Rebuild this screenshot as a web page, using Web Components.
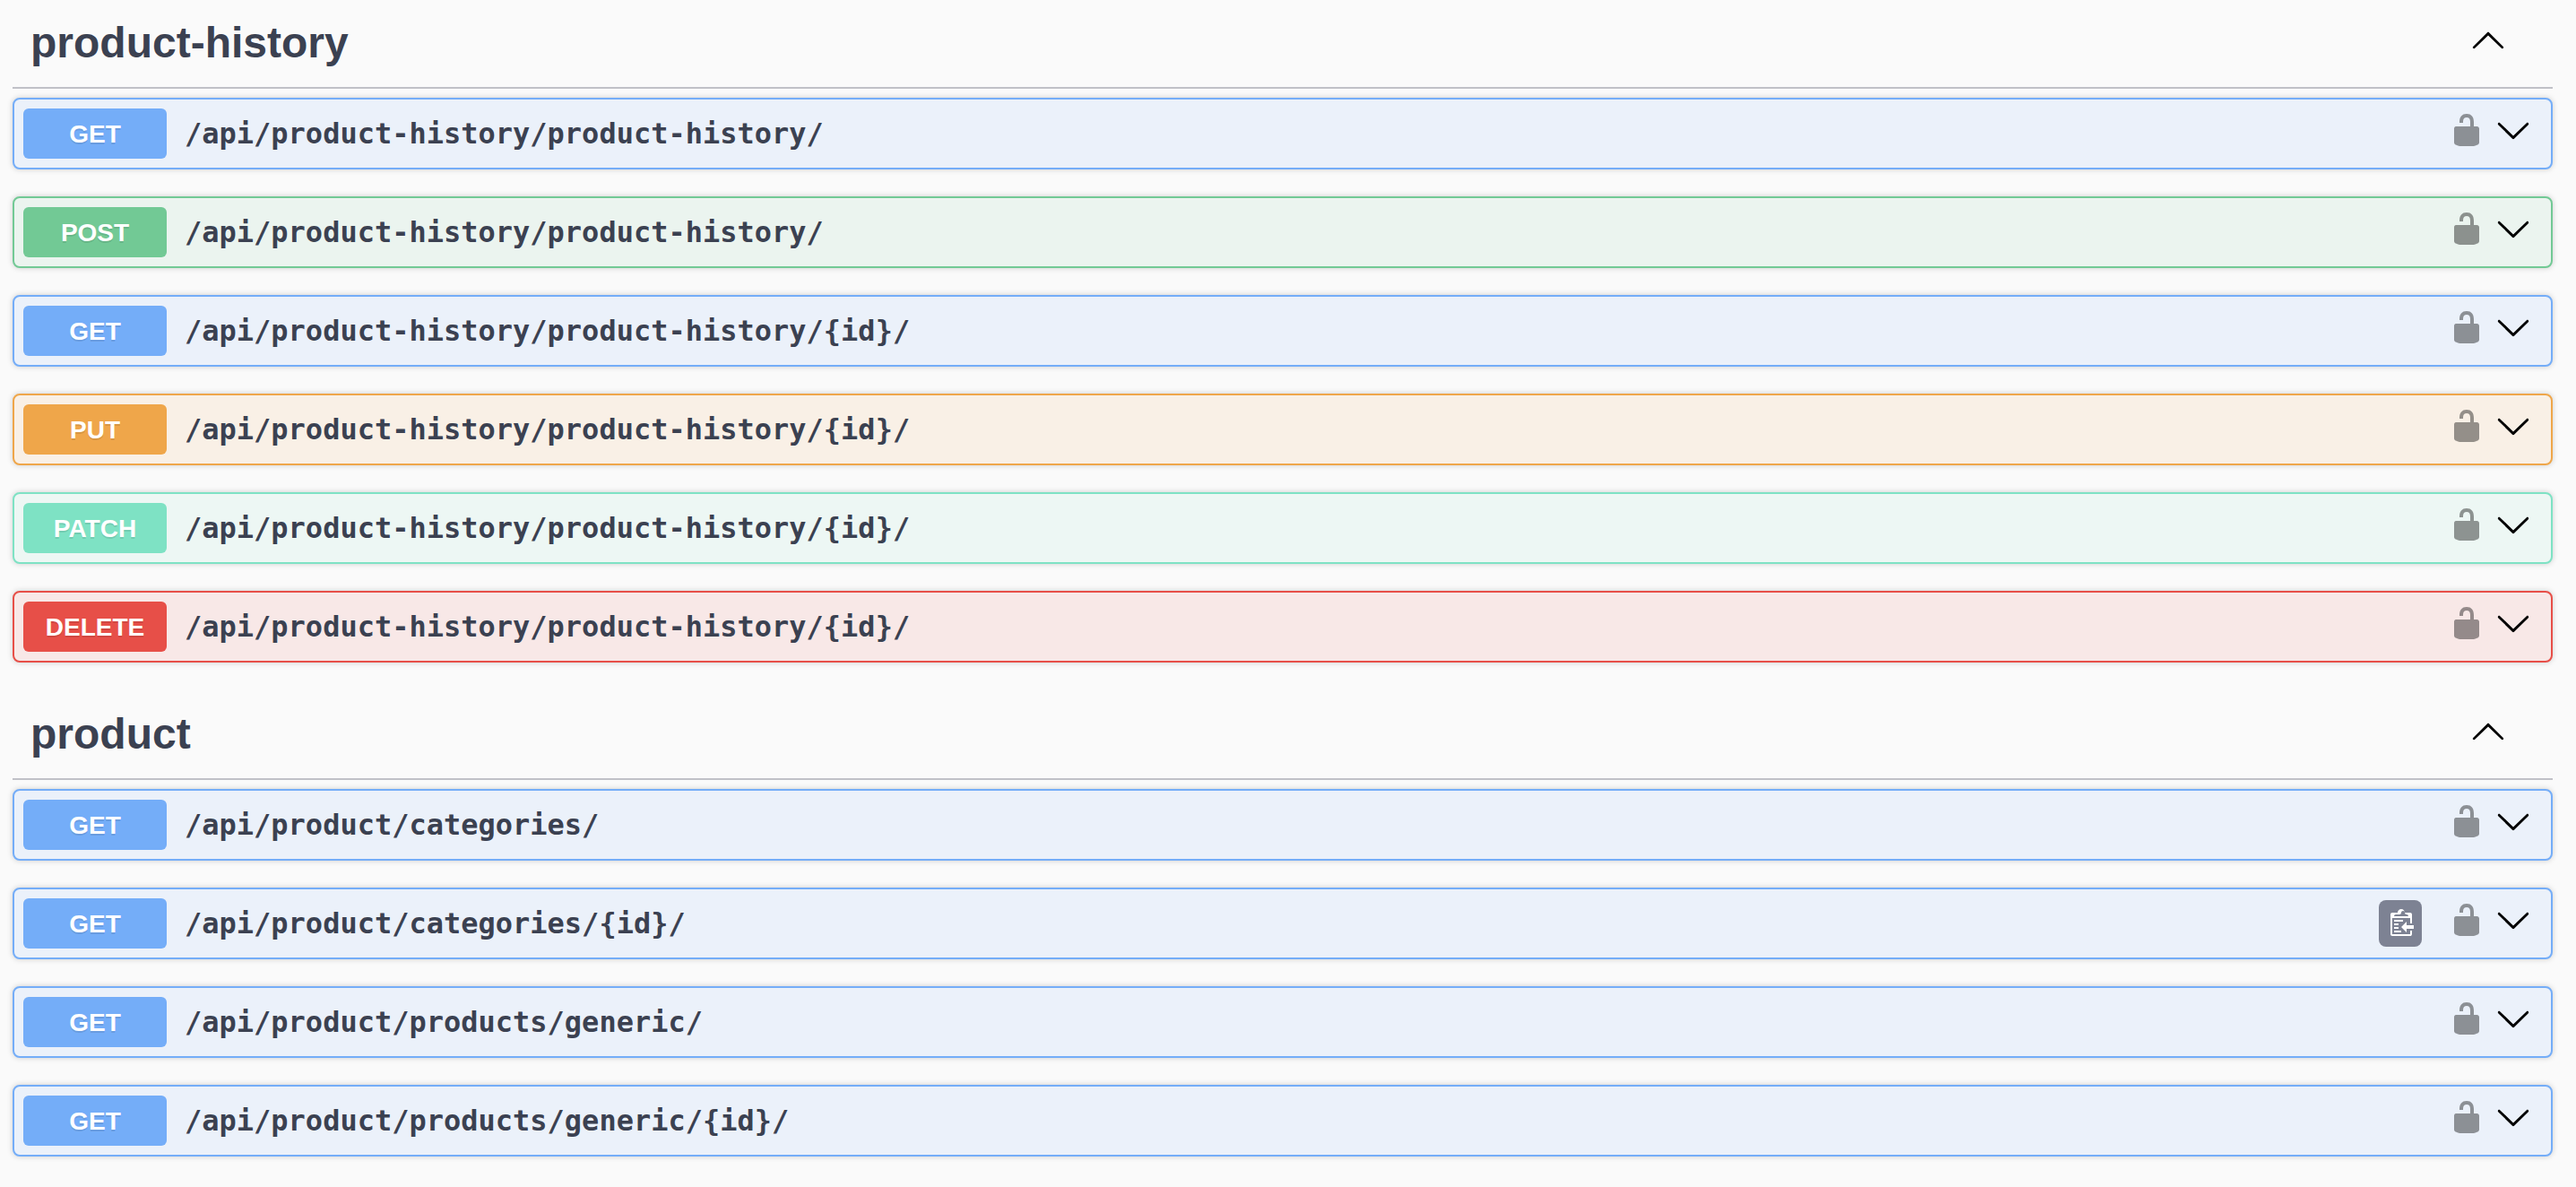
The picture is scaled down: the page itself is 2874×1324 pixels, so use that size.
<!DOCTYPE html>
<html lang="en">
<head>
<meta charset="utf-8">
<meta name="viewport" content="width=device-width, initial-scale=1">
<title>API operations</title>
<style>
  body { margin: 0; background: #fafafa; color: #3b4151; font-family: "Liberation Sans", Arial, sans-serif; }
</style>
</head>
<body>
<api-page>
  <api-section name="product-history">
    <api-operation method="get" path="/api/product-history/product-history/"></api-operation>
    <api-operation method="post" path="/api/product-history/product-history/"></api-operation>
    <api-operation method="get" path="/api/product-history/product-history/{id}/"></api-operation>
    <api-operation method="put" path="/api/product-history/product-history/{id}/"></api-operation>
    <api-operation method="patch" path="/api/product-history/product-history/{id}/"></api-operation>
    <api-operation method="delete" path="/api/product-history/product-history/{id}/"></api-operation>
  </api-section>
  <api-section name="product">
    <api-operation method="get" path="/api/product/categories/"></api-operation>
    <api-operation method="get" path="/api/product/categories/{id}/" copyable></api-operation>
    <api-operation method="get" path="/api/product/products/generic/"></api-operation>
    <api-operation method="get" path="/api/product/products/generic/{id}/"></api-operation>
  </api-section>
</api-page>

<script>
const ICONS = {
  down: ['0 0 20 20', '<path d="M17.418 6.109c.272-.268.709-.268.979 0s.271.701 0 .969l-7.908 7.83c-.27.268-.707.268-.979 0l-7.908-7.83c-.27-.268-.27-.701 0-.969.271-.268.709-.268.979 0L10 13.25l7.418-7.141z"/>'],
  up: ['0 0 20 20', '<path d="M17.418 14.908c.272.268.709.268.979 0s.271-.701 0-.969l-7.908-7.83c-.27-.268-.707-.268-.979 0l-7.908 7.83c-.27.268-.27.701 0 .969.271.268.709.268.979 0L10 7.767l7.418 7.141z"/>'],
  unlocked: ['0 0 20 20', '<path d="M15.8 8H14V5.6C14 2.703 12.665 1 10 1 7.334 1 6 2.703 6 5.6V6h2v-.801C8 3.754 8.797 3 10 3c1.203 0 2 .754 2 2.199V8H4c-.553 0-1 .646-1 1.199V17c0 .549.428 1.139.951 1.307l1.197.387C5.672 18.861 6.55 19 7.1 19h5.8c.549 0 1.428-.139 1.951-.307l1.196-.387c.524-.167.953-.757.953-1.306V9.199C17 8.646 16.352 8 15.8 8z"/>'],
  copy: ['0 0 15 16', '<path transform="translate(2 -1)" fill-rule="evenodd" d="M2 13h4v1H2v-1zm5-6H2v1h5V7zm2 3V8l-3 3 3 3v-2h5v-2H9zM4.5 9H2v1h2.5V9zM2 12h2.5v-1H2v1zm9 1h1v2c-.02.28-.11.52-.3.7-.19.18-.42.28-.7.3H1c-.55 0-1-.45-1-1V4c0-.55.45-1 1-1h3c0-1.11.89-2 2-2 1.11 0 2 .89 2 2h3c.55 0 1 .45 1 1v5h-1V6H1v9h10v-2zM2 5h8c0-.55-.45-1-1-1H9c-.55 0-1-.45-1-1s-.45-1-1-1-1 .45-1 1-.45 1-1 1H3c-.55 0-1 .45-1 1z"/>']
};

const BUTTON_RESET = 'button { margin: 0; padding: 0; border: 0; background: none; color: inherit; font: inherit; cursor: pointer; }';

class ApiIcon extends HTMLElement {
  connectedCallback() {
    const [box, shape] = ICONS[this.getAttribute('name')];
    this.attachShadow({ mode: 'open' }).innerHTML = `
      <style>
        :host { display: block; width: 40px; height: 40px; }
        svg { display: block; width: 100%; height: 100%; fill: currentColor; }
      </style>
      <svg viewBox="${box}" aria-hidden="true">${shape}</svg>`;
  }
}

class ApiPage extends HTMLElement {
  connectedCallback() {
    this.attachShadow({ mode: 'open' }).innerHTML = `
      <style>
        :host { display: block; padding: 0 26px 32px 14px; }
        main { display: flex; flex-direction: column; gap: 32px; }
      </style>
      <main><slot></slot></main>`;
  }
}

class ApiSection extends HTMLElement {
  connectedCallback() {
    const name = this.getAttribute('name');
    this.attachShadow({ mode: 'open' }).innerHTML = `
      <style>
        ${BUTTON_RESET}
        :host { display: block; }
        header { display: flex; align-items: center; padding: 20px 52px 21px 20px; border-bottom: 2px solid #c0c1c7; }
        h2 { flex: 1; margin: 0; font-size: 48px; line-height: 56px; font-weight: 700; }
        button { color: #000; padding-bottom: 8px; }
        .list { display: flex; flex-direction: column; gap: 30px; padding-top: 10px; }
      </style>
      <section>
        <header>
          <h2>${name}</h2>
          <button type="button" aria-label="Collapse ${name}" aria-expanded="true"><api-icon name="up"></api-icon></button>
        </header>
        <div class="list"><slot></slot></div>
      </section>`;
  }
}

class ApiOperation extends HTMLElement {
  connectedCallback() {
    const method = this.getAttribute('method');
    const path = this.getAttribute('path');
    const copy = this.hasAttribute('copyable')
      ? '<button class="copy" type="button" aria-label="Copy path"><api-icon name="copy"></api-icon></button>' : '';
    this.attachShadow({ mode: 'open' }).innerHTML = `
      <style>
        ${BUTTON_RESET}
        :host { display: block; --tone: #74adf8; --wash: #ebf1fa; }
        :host([method="post"]) { --tone: #72c995; --wash: #ebf4ef; }
        :host([method="put"]) { --tone: #efa64a; --wash: #f9f0e6; }
        :host([method="patch"]) { --tone: #7ee2c4; --wash: #edf7f4; }
        :host([method="delete"]) { --tone: #e74f48; --wash: #f8e8e7; }
        .row { display: flex; align-items: center; padding: 10px 22px 10px 10px; border: 2px solid var(--tone); border-radius: 8px; background: var(--wash); box-shadow: 0 0 6px rgba(0, 0, 0, .19); }
        .summary { flex: 1; display: flex; align-items: center; gap: 20px; text-align: left; }
        .method { width: 160px; padding-top: 2px; border-radius: 6px; background: var(--tone); color: #fff; font-size: 28px; line-height: 54px; font-weight: 700; text-align: center; text-shadow: 0 2px 0 rgba(0, 0, 0, .1); }
        .path { font: 700 32px/40px "DejaVu Sans Mono", monospace; }
        .copy { display: flex; align-items: center; justify-content: center; width: 48px; height: 52px; margin-right: 30px; border-radius: 8px; background: #7d8293; color: #fff; }
        .copy api-icon { width: 30px; height: 32px; }
        .tools { display: flex; gap: 12px; padding-bottom: 8px; color: #000; }
        .lock { opacity: .4; }
      </style>
      <div class="row">
        <button class="summary" type="button"><span class="method">${method.toUpperCase()}</span><span class="path">${path}</span></button>
        ${copy}
        <div class="tools">
          <button class="lock" type="button" aria-label="Authorize"><api-icon name="unlocked"></api-icon></button>
          <button type="button" aria-label="Expand operation" aria-expanded="false"><api-icon name="down"></api-icon></button>
        </div>
      </div>`;
  }
}

customElements.define('api-icon', ApiIcon);
customElements.define('api-page', ApiPage);
customElements.define('api-section', ApiSection);
customElements.define('api-operation', ApiOperation);
</script>
</body>
</html>
